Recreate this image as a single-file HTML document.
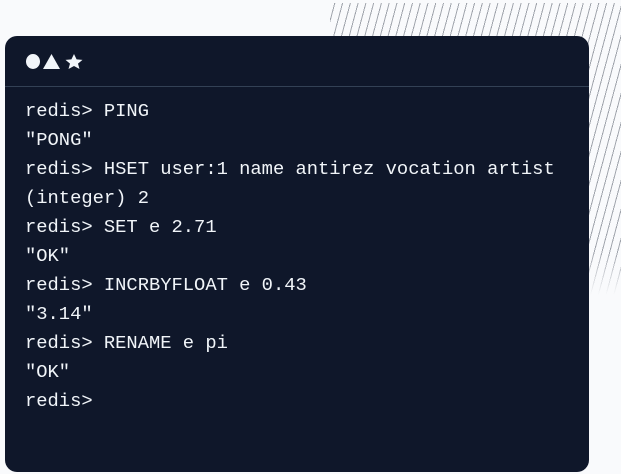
<!DOCTYPE html>
<html><head><style>
html,body{margin:0;padding:0;width:621px;height:474px;background:#f9fafc;overflow:hidden;position:relative;font-family:"Liberation Mono",monospace}
.stripes{position:absolute;left:330px;top:3px;width:291px;height:292px;
background:repeating-linear-gradient(-75deg,transparent 0,transparent 6.5px,#8a8f99 6.5px,#8a8f99 7.5px);
-webkit-mask-image:linear-gradient(to bottom,#000 85%,transparent);opacity:.8}
.card{position:absolute;left:5px;top:36px;width:584px;height:436px;background:#0f172a;border-radius:12px;overflow:hidden}
.hdr{height:50px;border-bottom:1px solid #334155;position:relative}
.hdr svg{position:absolute;left:20px;top:17px}
.body{padding:10px 0 0 20px;color:#f1f5f9;font-size:18.8px;line-height:29px;white-space:pre}
</style></head><body>
<div class="stripes"></div>
<div class="card">
<div class="hdr"><svg width="64" height="18" viewBox="0 0 64 18">
<ellipse cx="8" cy="8.5" rx="7" ry="7.5" fill="#f1f5f9"/>
<polygon points="18,16 26.5,1 35,16" fill="#f1f5f9"/>
<polygon points="49,1 51.6,6.4 57.5,6.9 53,10.6 54.5,16 49,13 43.5,16 45,10.6 40.5,6.9 46.4,6.4" fill="#f1f5f9"/>
</svg></div>
<div class="body">redis&gt; PING
"PONG"
redis&gt; HSET user:1 name antirez vocation artist
(integer) 2
redis&gt; SET e 2.71
"OK"
redis&gt; INCRBYFLOAT e 0.43
"3.14"
redis&gt; RENAME e pi
"OK"
redis&gt;</div>
</div>
</body></html>
